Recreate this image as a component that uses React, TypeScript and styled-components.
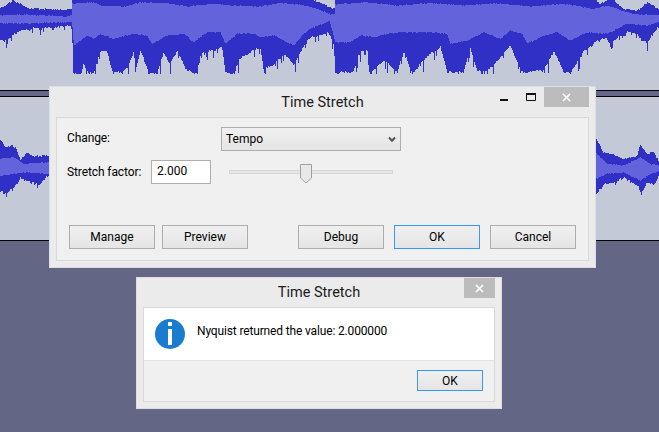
import React from 'react';
import styled, { createGlobalStyle } from 'styled-components';

const GlobalStyle = createGlobalStyle`
  html, body {
    margin: 0;
    padding: 0;
    background: #636685;
    overflow: hidden;
  }
  * {
    box-sizing: border-box;
  }
`;

const Desktop = styled.div`
  position: relative;
  width: 659px;
  height: 432px;
  background: #636685;
  font-family: 'Roboto', 'Noto Sans', sans-serif;
  font-size: 12px;
  color: #000;
  overflow: hidden;
`;

const Track = styled.div<{ $height: number }>`
  height: ${({ $height }) => $height}px;
  background: #c3c9d6;
  svg {
    display: block;
  }
`;
const TrackGap = styled.div`
  height: 7px;
  background: #636685;
  border-top: 1px solid #000;
  border-bottom: 1px solid #000;
`;
const TrackEnd = styled.div`
  height: 1px;
  background: #000;
`;

const Window = styled.div<{ $left: number; $top: number; $width: number; $height: number }>`
  position: absolute;
  left: ${({ $left }) => $left}px;
  top: ${({ $top }) => $top}px;
  width: ${({ $width }) => $width}px;
  height: ${({ $height }) => $height}px;
  display: flex;
  flex-direction: column;
  background: #ebebeb;
  border: 1px solid #dcdee3;
  padding: 0 6px 6px;
`;
const TitleBar = styled.div<{ $height: number }>`
  position: relative;
  height: ${({ $height }) => $height}px;
  flex: none;
  display: flex;
  align-items: center;
  justify-content: center;
  font-size: 14.5px;
  color: #1c1c1c;
`;
const Controls = styled.div`
  position: absolute;
  top: 0;
  right: 0;
  display: flex;
  align-items: flex-start;
`;
const ControlButton = styled.div<{ $width: number; $close?: boolean }>`
  width: ${({ $width }) => $width}px;
  height: 20px;
  display: flex;
  align-items: center;
  justify-content: center;
  background: ${({ $close }) => ($close ? '#bcbcbc' : 'transparent')};
`;
const Panel = styled.div`
  flex: 1;
  display: flex;
  flex-direction: column;
  background: #f0f0f0;
  border: 1px solid #d9d9d9;
`;
const FormBody = styled(Panel)`
  padding: 9px 12px 11px 10px;
`;
const FormRow = styled.div<{ $height: number; $gapAfter: number }>`
  display: flex;
  align-items: center;
  height: ${({ $height }) => $height}px;
  margin-bottom: ${({ $gapAfter }) => $gapAfter}px;
`;
const FieldLabel = styled.div<{ $width: number; $lift?: number }>`
  width: ${({ $width }) => $width}px;
  flex: none;
  letter-spacing: -0.1px;
  margin-top: ${({ $lift }) => -($lift ?? 0)}px;
`;
const Select = styled.div`
  width: 180px;
  height: 24px;
  display: flex;
  align-items: center;
  justify-content: space-between;
  padding: 0 4px 0 4px;
  background: linear-gradient(#f0f0f0, #e5e5e5);
  border: 1px solid #adadad;
`;
const NumberInput = styled.div`
  width: 60px;
  height: 24px;
  display: flex;
  align-items: center;
  padding: 0 5px 2px;
  background: #fff;
  border: 1px solid #adadad;
`;
const Slider = styled.div`
  position: relative;
  width: 164px;
  height: 4px;
  margin-left: 18px;
  background: #e7e7e7;
  border: 1px solid #d6d6d6;
`;
const SliderThumb = styled.svg`
  position: absolute;
  left: 70px;
  top: -7px;
`;
const ButtonRow = styled.div`
  margin-top: auto;
  display: flex;
  padding-left: 2px;
`;
const ButtonGroup = styled.div<{ $gap: number }>`
  display: flex;
  gap: ${({ $gap }) => $gap}px;
`;
const Spacer = styled.div`
  flex: 1;
`;
const Button = styled.div<{ $primary?: boolean; $width?: number; $height?: number }>`
  width: ${({ $width }) => $width ?? 86}px;
  height: ${({ $height }) => $height ?? 24}px;
  display: flex;
  align-items: center;
  justify-content: center;
  background: linear-gradient(#f0f0f0, #e5e5e5);
  border: 1px solid ${({ $primary }) => ($primary ? '#3399ff' : '#adadad')};
`;
const MessageArea = styled.div`
  height: 53px;
  flex: none;
  display: flex;
  align-items: center;
  gap: 12px;
  padding: 0 0 1px 11px;
  background: #fff;
  border-bottom: 1px solid #e3e3e3;
`;
const MessageText = styled.div`
  margin-top: -6px;
  letter-spacing: -0.15px;
`;
const MessageFooter = styled.div`
  flex: 1;
  display: flex;
  justify-content: flex-end;
  padding: 9px 11px 0 0;
`;

const DARK = '#3030c6';
const LIGHT = '#6363db';

type Pt = [number, number];

// profiles were read off a 3x crop, so they stay in crop units and get scaled here
const envelope = (pts: Pt[], offX: number, offY: number) =>
  pts.map(([x, y]) => [offX + x / 3, offY + y / 3] as Pt);

const sample = (pts: Pt[], x: number) => {
  if (x <= pts[0][0]) return pts[0][1];
  for (let i = 1; i < pts.length; i++) {
    if (x <= pts[i][0]) {
      const [x0, y0] = pts[i - 1];
      const [x1, y1] = pts[i];
      return y0 + ((y1 - y0) * (x - x0)) / (x1 - x0 || 1);
    }
  }
  return pts[pts.length - 1][1];
};

const seeded = (seed: number) => {
  let s = seed;
  return () => {
    s = (s * 16807) % 2147483647;
    return s / 2147483647;
  };
};

interface WaveProfile {
  darkTop: Pt[];
  lightTop: Pt[];
  lightBottom: Pt[];
  darkBottom: Pt[];
}

interface WaveformProps {
  profile: WaveProfile;
  from: number;
  to: number;
  height: number;
  floor: number;
  seed: number;
  spike: number;
}

const Waveform = ({ profile, from, to, height, floor, seed, spike }: WaveformProps) => {
  const rnd = seeded(seed);
  let dark = '';
  let light = '';
  let walk = 0;
  for (let x = from; x < to; x++) {
    walk = walk * 0.7 + (rnd() - 0.5) * 3;
    const top = sample(profile.darkTop, x) - rnd() * 1.5 + walk * 0.3;
    const lTop = sample(profile.lightTop, x) + rnd();
    const lBottom = sample(profile.lightBottom, x) + rnd();
    let bottom = sample(profile.darkBottom, x) + rnd() * 1.5 + walk * 0.6;
    // narrow spikes, only where the peaks stand well clear of the light band
    const reach = Math.min(1, (bottom - lBottom) / 30);
    if (rnd() < 0.2) bottom += 1 + rnd() * spike * reach;
    bottom = Math.min(bottom, floor - (rnd() < 0.3 ? 1 : 0));
    const col = x + 0.5;
    dark += `M${col} ${Math.round(top)}V${Math.round(bottom)}`;
    light += `M${col} ${Math.round(lTop)}V${Math.round(lBottom)}`;
  }
  return (
    <svg width={659} height={height} viewBox={`0 0 659 ${height}`} shapeRendering="crispEdges">
      <path d={dark} stroke={DARK} strokeWidth={1} fill="none" />
      <path d={light} stroke={LIGHT} strokeWidth={1} fill="none" />
    </svg>
  );
};

const topLeft: WaveProfile = {
  darkTop: envelope([[0, 28], [20, 15], [40, 5], [60, 15], [80, 28], [200, 32], [214, 30], [216, -5], [900, -5], [930, -5], [950, 8], [990, 25]], 0, 0),
  lightTop: envelope([[0, 45], [70, 42], [200, 48], [214, 42], [216, 10], [280, 5], [300, 15], [380, 18], [420, 5], [500, 8], [560, 18], [640, 10], [700, 15], [780, 18], [840, 8], [900, 12], [950, 25], [990, 40]], 0, 0),
  lightBottom: envelope([[0, 68], [100, 68], [215, 65], [220, 135], [260, 105], [280, 115], [300, 100], [340, 115], [400, 100], [440, 105], [455, 130], [500, 105], [550, 100], [580, 125], [620, 95], [660, 95], [675, 130], [710, 100], [760, 100], [780, 110], [820, 105], [880, 135], [910, 100], [930, 85], [990, 60]], 0, 0),
  darkBottom: envelope([[0, 118], [20, 118], [50, 95], [100, 85], [200, 75], [215, 80], [218, 215], [240, 220], [250, 190], [265, 220], [280, 215], [300, 155], [320, 150], [335, 215], [360, 215], [385, 200], [400, 150], [405, 215], [420, 150], [445, 220], [470, 220], [490, 155], [510, 190], [530, 150], [560, 210], [590, 215], [600, 160], [630, 150], [665, 140], [675, 215], [700, 215], [720, 170], [780, 140], [790, 205], [820, 190], [850, 165], [880, 190], [905, 150], [915, 130], [930, 110], [960, 105], [990, 90]], 0, 0),
};

const topRight: WaveProfile = {
  darkTop: envelope([[0, 28], [12, 25], [15, -5], [790, -5], [810, 15], [840, -5], [880, 28], [920, 35], [950, 10], [987, 30]], 330, 0),
  lightTop: envelope([[0, 42], [12, 40], [15, 12], [100, 5], [200, 15], [300, 8], [400, 15], [500, 8], [600, 18], [700, 10], [790, 25], [830, 15], [880, 32], [920, 42], [987, 45]], 330, 0),
  lightBottom: envelope([[0, 70], [15, 125], [60, 125], [90, 105], [130, 110], [170, 100], [210, 95], [300, 95], [350, 100], [360, 130], [410, 120], [460, 95], [510, 115], [540, 90], [575, 100], [590, 130], [640, 105], [680, 95], [720, 120], [770, 95], [830, 100], [890, 70], [950, 75], [987, 65]], 330, 0),
  darkBottom: envelope([[0, 110], [10, 130], [15, 215], [70, 215], [85, 155], [110, 145], [120, 215], [165, 180], [200, 215], [220, 150], [245, 215], [290, 170], [330, 140], [350, 215], [400, 215], [420, 140], [440, 210], [470, 210], [510, 170], [540, 135], [575, 215], [640, 210], [670, 150], [700, 215], [720, 215], [760, 150], [800, 120], [830, 110], [840, 140], [860, 110], [900, 90], [950, 125], [987, 70]], 330, 0),
};

const midLeft: WaveProfile = {
  darkTop: envelope([[0, 165], [15, 190], [30, 185], [45, 190], [60, 225], [80, 205], [100, 215], [147, 215]], 0, -12),
  lightTop: envelope([[0, 220], [40, 215], [70, 235], [147, 230]], 0, -12),
  lightBottom: envelope([[0, 270], [40, 265], [70, 260], [147, 265]], 0, -12),
  darkBottom: envelope([[0, 318], [20, 322], [40, 308], [60, 275], [100, 288], [118, 298], [147, 268]], 0, -12),
};

const midRight: WaveProfile = {
  darkTop: envelope([[798, 165], [820, 205], [850, 210], [880, 225], [920, 215], [930, 180], [950, 210], [970, 200], [987, 235]], 330, -12),
  lightTop: envelope([[798, 205], [830, 235], [880, 240], [930, 215], [960, 235], [987, 240]], 330, -12),
  lightBottom: envelope([[798, 280], [830, 265], [880, 262], [930, 285], [960, 265], [987, 258]], 330, -12),
  darkBottom: envelope([[798, 328], [820, 295], [850, 290], [880, 275], [920, 298], [935, 322], [950, 290], [970, 293], [987, 270]], 330, -12),
};

const CloseIcon = () => (
  <svg width={9} height={9} viewBox="0 0 9 9">
    <path d="M1 1L8 8M8 1L1 8" stroke="#fff" strokeWidth={1.7} fill="none" />
  </svg>
);

const MinimizeIcon = () => (
  <svg width={8} height={8} viewBox="0 0 8 8">
    <rect x={0} y={6} width={8} height={2} fill="#111" />
  </svg>
);

const MaximizeIcon = () => (
  <svg width={10} height={8} viewBox="0 0 10 8">
    <path d="M0.5 1.5H9.5V7.5H0.5Z" stroke="#111" strokeWidth={1} fill="none" />
    <rect x={0} y={0} width={10} height={2} fill="#111" />
  </svg>
);

const ChevronIcon = () => (
  <svg width={8} height={7} viewBox="0 0 8 7">
    <path d="M1 1.5L4 4.7L7 1.5" stroke="#555" strokeWidth={2} fill="none" />
  </svg>
);

const InfoIcon = () => (
  <svg width={30} height={30} viewBox="0 0 30 30">
    <circle cx={15} cy={15} r={15} fill="#1a7ccf" />
    <rect x={13} y={3} width={4} height={4} fill="#fff" />
    <rect x={13} y={10} width={4} height={16} fill="#fff" />
  </svg>
);

export default function App() {
  return (
    <Desktop>
      <GlobalStyle />
      <Track $height={90}>
        <svg width={659} height={90} viewBox="0 0 659 90" shapeRendering="crispEdges">
          <Waveform profile={topLeft} from={0} to={330} height={90} floor={74} seed={7} spike={16} />
          <Waveform profile={topRight} from={330} to={659} height={90} floor={74} seed={91} spike={16} />
        </svg>
      </Track>
      <TrackGap />
      <Track $height={143}>
        <svg width={659} height={143} viewBox="0 0 659 143" shapeRendering="crispEdges">
          <Waveform profile={midLeft} from={0} to={49} height={143} floor={143} seed={23} spike={6} />
          <Waveform profile={midRight} from={596} to={659} height={143} floor={143} seed={57} spike={6} />
        </svg>
      </Track>
      <TrackEnd />

      <Window $left={49} $top={86} $width={547} $height={182}>
        <TitleBar $height={30}>
          Time Stretch
          <Controls>
            <ControlButton $width={28}>
              <MinimizeIcon />
            </ControlButton>
            <ControlButton $width={26}>
              <MaximizeIcon />
            </ControlButton>
            <ControlButton $width={45} $close>
              <CloseIcon />
            </ControlButton>
          </Controls>
        </TitleBar>
        <FormBody>
          <FormRow $height={24} $gapAfter={9}>
            <FieldLabel $width={154} $lift={2}>
              Change:
            </FieldLabel>
            <Select>
              Tempo
              <ChevronIcon />
            </Select>
          </FormRow>
          <FormRow $height={24} $gapAfter={0}>
            <FieldLabel $width={84}>Stretch factor:</FieldLabel>
            <NumberInput>2.000</NumberInput>
            <Slider>
              <SliderThumb width={12} height={20} viewBox="0 0 12 20">
                <path d="M0.5 0.5H11.5V14L6 19L0.5 14Z" fill="#e8e8e8" stroke="#a0a0a0" strokeWidth={1} />
              </SliderThumb>
            </Slider>
          </FormRow>
          <ButtonRow>
            <ButtonGroup $gap={7}>
              <Button>Manage</Button>
              <Button>Preview</Button>
            </ButtonGroup>
            <Spacer />
            <ButtonGroup $gap={10}>
              <Button>Debug</Button>
              <Button $primary>OK</Button>
              <Button>Cancel</Button>
            </ButtonGroup>
          </ButtonRow>
        </FormBody>
      </Window>

      <Window $left={136} $top={277} $width={366} $height={132}>
        <TitleBar $height={29}>
          Time Stretch
          <Controls>
            <ControlButton $width={31} $close>
              <CloseIcon />
            </ControlButton>
          </Controls>
        </TitleBar>
        <Panel>
          <MessageArea>
            <InfoIcon />
            <MessageText>Nyquist returned the value: 2.000000</MessageText>
          </MessageArea>
          <MessageFooter>
            <Button $primary $width={66} $height={21}>
              OK
            </Button>
          </MessageFooter>
        </Panel>
      </Window>
    </Desktop>
  );
}
